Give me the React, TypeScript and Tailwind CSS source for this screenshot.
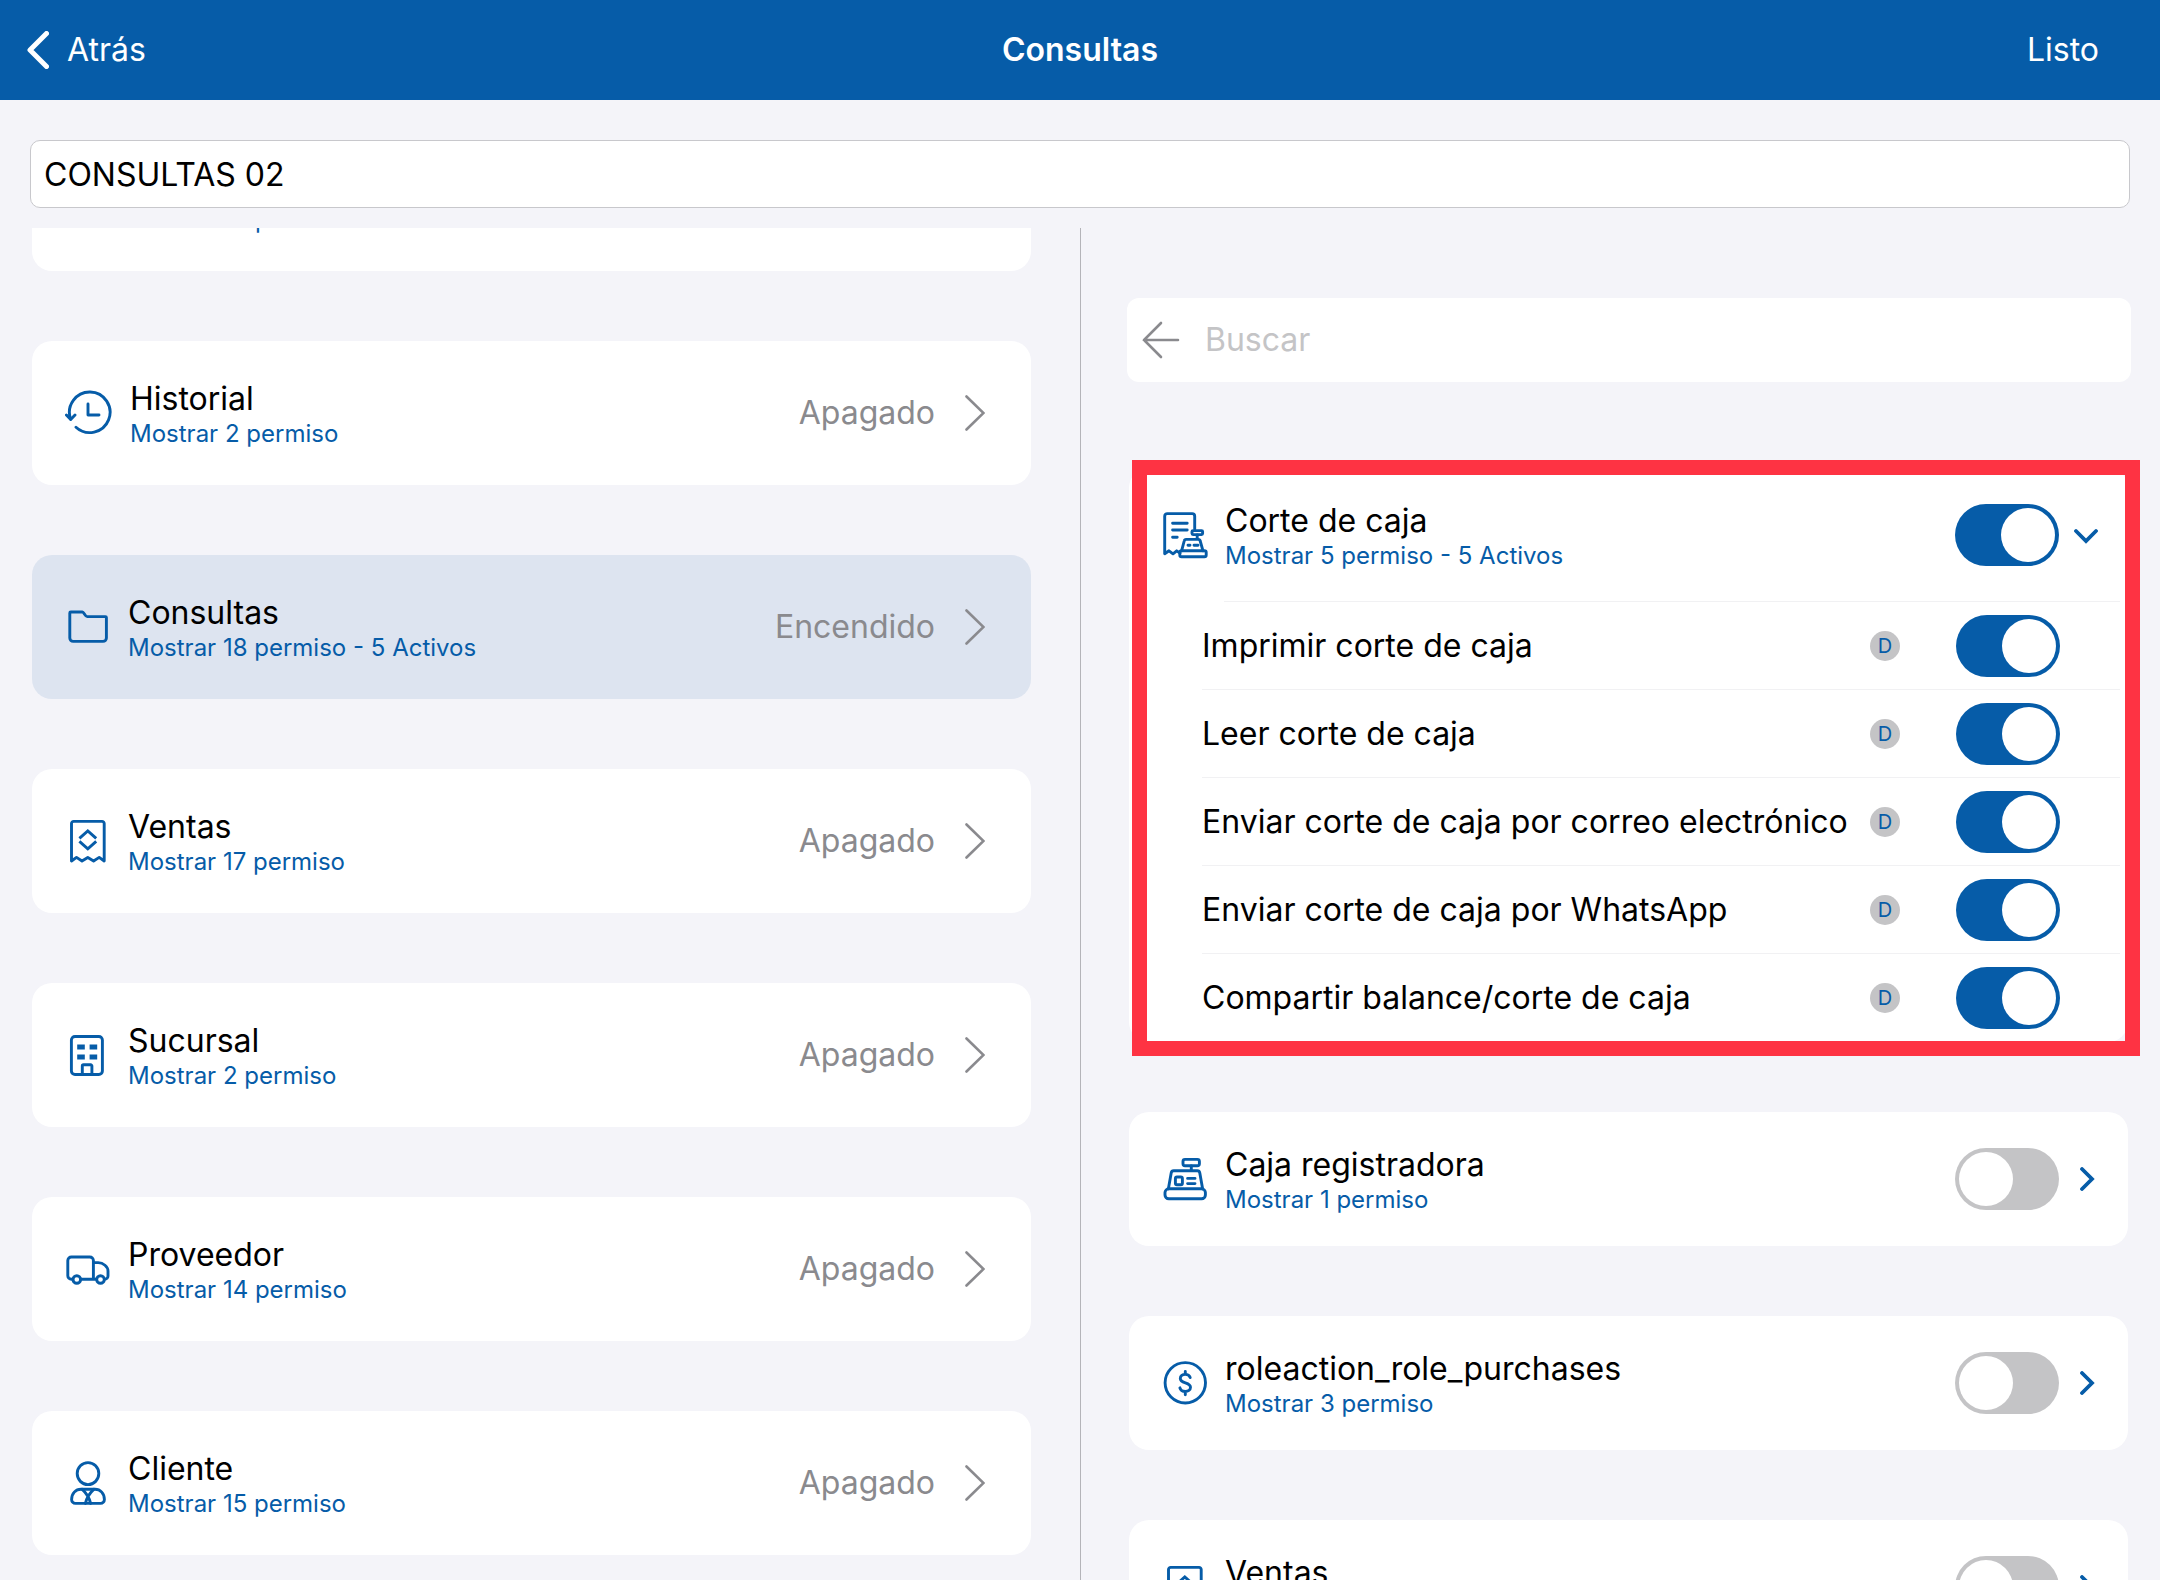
import { useState } from 'react';
import type { ReactNode } from 'react';
import clsx from 'clsx';

type Area = {
  title: string;
  permissions: number;
  active?: number;
  icon: ReactNode;
};

function Icon({ children, wide }: { children: ReactNode; wide?: boolean }) {
  return (
    <svg
      viewBox={wide ? '0 0 48 48' : '0 0 46 48'}
      className={clsx('h-12 shrink-0 text-[#065ca8]', wide ? 'w-12' : 'w-[46px]')}
      fill="none"
      stroke="currentColor"
      strokeWidth="2.9"
      strokeLinecap="round"
      strokeLinejoin="round"
      aria-hidden="true"
    >
      {children}
    </svg>
  );
}

const HistoryIcon = () => (
  <Icon wide>
    <path d="M5.6 30A20.3 20.3 0 1 1 11 38.2" />
    <path d="M1.4 26l4.3 4.4L10 26" />
    <path d="M23 15v11h11" />
  </Icon>
);

const FolderIcon = () => (
  <Icon>
    <path d="M4.8 10a1 1 0 0 1 1-1h11.6c1.6 0 2.6 4.6 4.8 4.6h18.2a1 1 0 0 1 1 1V35a3.4 3.4 0 0 1-3.4 3.4H8.2A3.4 3.4 0 0 1 4.8 35z" />
  </Icon>
);

const ReceiptIcon = () => (
  <Icon>
    <path d="M6.5 44V6.6a2.2 2.2 0 0 1 2.2-2.2H37a2.2 2.2 0 0 1 2.2 2.2V44l-5-3.6-5.6 3.6-5.8-3.6L17 44l-5.5-3.6z" />
    <path
      d="M14.4 21.4l8.4-7.4 8.4 7.4M14.4 24.4l8.4 7.4 8.4-7.4"
      strokeLinecap="butt"
      strokeLinejoin="miter"
    />
  </Icon>
);

const BuildingIcon = () => (
  <Icon>
    <rect x="6.4" y="5.5" width="31" height="38" rx="3.6" />
    <path d="M17.3 43.5V35a1.2 1.2 0 0 1 1.2-1.2h7.2a1.2 1.2 0 0 1 1.2 1.2v8.5" />
    <path d="M12.2 16h7.6M24.6 16h7.6M12.2 26h7.6M24.6 26h7.6" strokeWidth="4.8" strokeLinecap="butt" />
  </Icon>
);

const TruckIcon = () => (
  <Icon>
    <path d="M7.8 34.3H6.4a3.6 3.6 0 0 1-3.6-3.6V15.6A3.6 3.6 0 0 1 6.4 12h18.4a3.6 3.6 0 0 1 3.6 3.6v18.7M15.6 34.3h16" />
    <path d="M28.4 17.6h4.8c5 0 9.8 4.2 9.8 8.4v5a3.3 3.3 0 0 1-3.3 3.3" />
    <circle cx="11.8" cy="34.5" r="3.8" />
    <circle cx="35.5" cy="34.5" r="3.8" />
  </Icon>
);

const ClientIcon = () => (
  <Icon>
    <ellipse cx="23" cy="14.6" rx="10.8" ry="11" />
    <path d="M6.6 40.6c0-6 4-10.4 9.4-10.4h14c5.4 0 9.4 4.4 9.4 10.4a3.8 3.8 0 0 1-3.8 3.8H10.4a3.8 3.8 0 0 1-3.8-3.8z" />
    <path d="M17 30.2c4 3.6 7.2 8.4 8.6 14.2M29 30.2c-4 3.6-7.2 8.4-8.6 14.2" />
  </Icon>
);

const RegisterIcon = () => (
  <Icon>
    <rect x="21" y="4.4" width="16.4" height="6.4" rx="2" />
    <path d="M29.3 11v4" />
    <path d="M6.4 33.8L9.2 18a2.6 2.6 0 0 1 2.6-2.2h23.4A2.6 2.6 0 0 1 37.800 18l2.8 15.800" />
    <rect x="3" y="33.8" width="40.4" height="10" rx="3.8" />
    <rect x="13.4" y="22" width="7" height="7.8" rx="1.6" />
    <path d="M25.6 23.4H33M25.6 28.6H33" />
  </Icon>
);

const CashCutIcon = () => (
  <Icon>
    <path d="M32.7 18V5.2a2.6 2.6 0 0 0-2.6-2.6H5.3a2.6 2.6 0 0 0-2.6 2.6v37.6l4.3-3 4 3 3.7-3 3.3 2.4" />
    <path d="M10.6 12.3h14.6M10.6 19h14.6M10.6 26.3h4.6" />
    <rect x="30" y="19.6" width="10.6" height="4" rx="1" />
    <path d="M35.2 24v3.6" />
    <path d="M19.6 39.8l2.6-9.8a2 2 0 0 1 2-1.6h12a2 2 0 0 1 2 1.6l2.8 9.8" />
    <rect x="17.8" y="39.8" width="26.4" height="6" rx="1.8" />
    <path d="M26 34.2h2M32 34.2h4" />
  </Icon>
);

const MoneyIcon = () => (
  <Icon>
    <circle cx="23.3" cy="23.8" r="20.2" />
    <path d="M28.2 18.6c-.8-2.2-2.6-3.2-4.9-3.2-2.8 0-5 1.5-5 4 0 5.6 10.2 3.2 10.2 8.8 0 2.7-2.4 4.2-5.2 4.2-2.6 0-4.8-1.3-5.4-3.6M23.3 12.4v3M23.3 32.4v3.4" />
  </Icon>
);

function ChevronRight() {
  return (
    <svg
      viewBox="0 0 20 36"
      className="h-9 w-5 shrink-0"
      fill="none"
      stroke="currentColor"
      strokeWidth="2.6"
      strokeLinecap="round"
      aria-hidden="true"
    >
      <path d="M1.5 1.5L18.5 18L1.5 34.5" />
    </svg>
  );
}

const areas: Area[] = [
  { title: 'Inventario', permissions: 14, icon: <FolderIcon /> },
  { title: 'Historial', permissions: 2, icon: <HistoryIcon /> },
  { title: 'Consultas', permissions: 18, active: 5, icon: <FolderIcon /> },
  { title: 'Ventas', permissions: 17, icon: <ReceiptIcon /> },
  { title: 'Sucursal', permissions: 2, icon: <BuildingIcon /> },
  { title: 'Proveedor', permissions: 14, icon: <TruckIcon /> },
  { title: 'Cliente', permissions: 15, icon: <ClientIcon /> },
];

const cashCutPermissions = [
  'Imprimir corte de caja',
  'Leer corte de caja',
  'Enviar corte de caja por correo electrónico',
  'Enviar corte de caja por WhatsApp',
  'Compartir balance/corte de caja',
];

const groups: Area[] = [
  { title: 'Caja registradora', permissions: 1, icon: <RegisterIcon /> },
  { title: 'roleaction_role_purchases', permissions: 3, icon: <MoneyIcon /> },
  { title: 'Ventas', permissions: 17, icon: <ReceiptIcon /> },
];

function AreaText({ title, permissions, active }: Omit<Area, 'icon'>) {
  return (
    <span className="flex min-w-0 flex-1 flex-col pt-0.5 text-left">
      <span className="text-[32px] leading-10 text-black">{title}</span>
      <span className="text-2xl leading-[30px] text-[#065ca8]">
        Mostrar {permissions} permiso{active ? ` - ${active} Activos` : ''}
      </span>
    </span>
  );
}

function Switch({ label, defaultChecked }: { label: string; defaultChecked?: boolean }) {
  return (
    <input
      type="checkbox"
      role="switch"
      aria-label={label}
      defaultChecked={defaultChecked}
      className="flex h-[62px] w-[104px] shrink-0 cursor-pointer appearance-none items-center rounded-full bg-[#c4c4c6] p-1 before:size-[54px] before:rounded-full before:bg-white checked:justify-end checked:bg-[#065ca8]"
    />
  );
}

function AreaCard({ area, selected, onSelect }: { area: Area; selected: boolean; onSelect: () => void }) {
  return (
    <button
      type="button"
      onClick={onSelect}
      className={clsx(
        'flex h-36 w-full shrink-0 items-center gap-[17px] rounded-[20px] pr-[46px] pl-[33px]',
        selected ? 'bg-[#dde4f0]' : 'bg-white',
      )}
    >
      {area.icon}
      <AreaText title={area.title} permissions={area.permissions} active={area.active} />
      <span className="flex items-center gap-[30px] text-[32px] leading-10 text-[#8a8a8e]">
        {area.active ? 'Encendido' : 'Apagado'}
        <ChevronRight />
      </span>
    </button>
  );
}

function GroupRow({ group, open }: { group: Area; open?: boolean }) {
  return (
    <div className="flex h-[134px] items-center gap-[17px] pr-[30px] pl-[33px]">
      {group.icon}
      <AreaText title={group.title} permissions={group.permissions} active={group.active} />
      <div className="flex items-center gap-[15px]">
        <Switch label={group.title} defaultChecked={open} />
        <button
          type="button"
          aria-expanded={Boolean(open)}
          aria-label={`${open ? 'Contraer' : 'Abrir'} ${group.title}`}
          className="text-[#065ca8]"
        >
          <svg
            viewBox="0 0 24 24"
            className="size-6"
            fill="none"
            stroke="currentColor"
            strokeWidth="3.8"
            strokeLinecap="round"
            aria-hidden="true"
          >
            <path d={open ? 'M2 8l10 10L22 8' : 'M8 2l10 10L8 22'} />
          </svg>
        </button>
      </div>
    </div>
  );
}

export default function App() {
  const [name, setName] = useState('CONSULTAS 02');
  const [selected, setSelected] = useState('Consultas');

  return (
    <div className="flex h-screen flex-col overflow-hidden bg-[#f4f4f9] font-['Inter','Liberation_Sans',sans-serif] text-black">
      <header className="grid h-[100px] shrink-0 grid-cols-[1fr_auto_1fr] items-center bg-[#065ca8] text-[32px] leading-10 text-white">
        <button type="button" className="flex items-center gap-[18px] justify-self-start pl-[27px]">
          <svg
            viewBox="0 0 22 38"
            className="h-[38px] w-[22px]"
            fill="none"
            stroke="currentColor"
            strokeWidth="5"
            strokeLinecap="round"
            strokeLinejoin="round"
            aria-hidden="true"
          >
            <path d="M19.5 2.5L3 19l16.5 16.5" />
          </svg>
          Atrás
        </button>
        <h1 className="font-semibold">Consultas</h1>
        <button type="button" className="justify-self-end pr-[61px]">
          Listo
        </button>
      </header>

      <div className="shrink-0 px-[30px] pt-10 pb-5">
        <input
          type="text"
          aria-label="Nombre del rol"
          value={name}
          onChange={(e) => setName(e.target.value)}
          className="h-[68px] w-full rounded-[10px] border border-[#c8c8cc] bg-white px-[13px] text-[32px] leading-10 outline-none"
        />
      </div>

      <main className="grid min-h-0 flex-1 grid-cols-2">
        <section className="overflow-hidden pr-[49px] pl-8">
          {/* list starts scrolled, first card is cut by the top edge */}
          <div className="-mt-[101px] flex flex-col gap-[70px]">
            {areas.map((area) => (
              <AreaCard
                key={area.title}
                area={area}
                selected={area.title === selected}
                onSelect={() => setSelected(area.title)}
              />
            ))}
          </div>
        </section>

        <section className="overflow-hidden border-l border-[#b4b4b9] pt-[70px] pr-[29px] pl-[46px]">
          <div className="flex h-[84px] items-center gap-[25px] rounded-xl bg-white px-[15px]">
            <button type="button" aria-label="Regresar" className="text-[#8a8a8e]">
              <svg
                viewBox="0 0 38 38"
                className="size-[38px]"
                fill="none"
                stroke="currentColor"
                strokeWidth="2.6"
                strokeLinecap="round"
                aria-hidden="true"
              >
                <path d="M19 2L2 19l17 17M2 19h34" />
              </svg>
            </button>
            <input
              type="text"
              aria-label="Buscar"
              placeholder="Buscar"
              className="min-w-0 flex-1 text-[32px] leading-10 outline-none placeholder:text-[#c4c4c6]"
            />
          </div>

          <div className="mt-[86px] flex flex-col gap-[70px] pr-[3px] pl-[2px]">
            <div className="relative rounded-[20px] bg-white">
              <GroupRow
                group={{ title: 'Corte de caja', permissions: 5, active: 5, icon: <CashCutIcon /> }}
                open
              />
              <hr className="-mt-px mr-2 ml-[95px] border-[#f1f1f3]" />
              <ul className="pr-2 pl-[73px]">
                {cashCutPermissions.map((permission) => (
                  <li
                    key={permission}
                    className="flex h-[88px] items-center border-b border-[#f1f1f3] last:border-b-0"
                  >
                    <span className="min-w-0 flex-1 whitespace-nowrap text-[32px] leading-10">{permission}</span>
                    <span className="mr-14 flex size-[30px] shrink-0 items-center justify-center rounded-full bg-[#c4c4c6] text-xl text-[#065ca8]">
                      D
                    </span>
                    <div className="flex pr-[60px]">
                      <Switch label={permission} defaultChecked />
                    </div>
                  </li>
                ))}
              </ul>
              <div className="pointer-events-none absolute -top-2 -right-3 -bottom-3.5 left-[3px] border-[15px] border-[#fe3343]" />
            </div>

            {groups.map((group) => (
              <div key={group.title} className="rounded-[20px] bg-white">
                <GroupRow group={group} />
              </div>
            ))}
          </div>
        </section>
      </main>
    </div>
  );
}
